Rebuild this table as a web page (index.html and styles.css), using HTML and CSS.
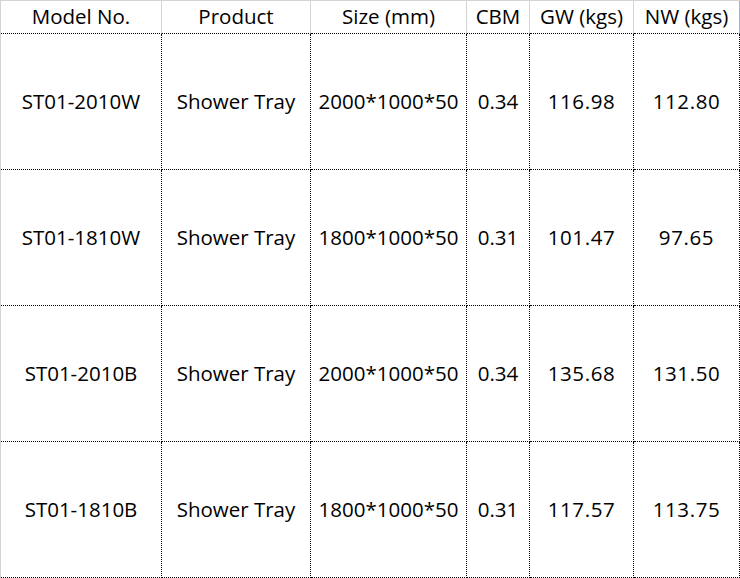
FILE: index.html
```html
<!DOCTYPE html>
<html>
<head>
<meta charset="utf-8">
<link rel="stylesheet" href="styles.css">
</head>
<body>
<table class="spec">
  <thead>
    <tr class="head">
      <th class="c1">Model No.</th>
      <th class="c2">Product</th>
      <th class="c3">Size (mm)</th>
      <th class="c4">CBM</th>
      <th class="c5">GW (kgs)</th>
      <th class="c6 last">NW (kgs)</th>
    </tr>
  </thead>
  <tbody>
    <tr class="row">
      <td>ST01-2010W</td><td>Shower Tray</td><td>2000*1000*50</td><td>0.34</td><td class="num">116.98</td><td class="num">112.80</td>
    </tr>
    <tr class="row">
      <td>ST01-1810W</td><td>Shower Tray</td><td>1800*1000*50</td><td>0.31</td><td class="num">101.47</td><td class="num">97.65</td>
    </tr>
    <tr class="row">
      <td>ST01-2010B</td><td>Shower Tray</td><td>2000*1000*50</td><td>0.34</td><td class="num">135.68</td><td class="num">131.50</td>
    </tr>
    <tr class="row">
      <td>ST01-1810B</td><td>Shower Tray</td><td>1800*1000*50</td><td>0.31</td><td class="num">117.57</td><td class="num">113.75</td>
    </tr>
  </tbody>
</table>
</body>
</html>
```
FILE: styles.css
```css
html, body {
  margin: 0;
  padding: 0;
  background: #ffffff;
}
.spec {
  border-collapse: separate;
  border-spacing: 0;
  table-layout: fixed;
  width: 740px;
  border-left: 1px solid #d4d4d4;
  border-top: 1px solid #d4d4d4;
  font-family: "Open Sans", "Noto Sans", sans-serif;
  font-size: 20.5px;
  color: #000;
}
.spec th, .spec td {
  padding: 0 0 2px 0;
  text-align: center;
  vertical-align: middle;
  white-space: nowrap;
  font-weight: normal;
}
.spec th {
  border-right: 1px solid #d4d4d4;
  border-bottom: 1px dotted #000;
}
.spec th.last {
  border-right-color: #9fb3cc;
}
.spec td {
  border-right: 1px dotted #000;
  border-bottom: 1px dotted #000;
}
.spec td.num {
  letter-spacing: 0.6px;
}
.head { height: 33px; }
.row { height: 136px; }
.c1 { width: 160px; }
.c2 { width: 148px; }
.c3 { width: 155px; }
.c4 { width: 62px; }
.c5 { width: 103px; }
.c6 { width: 105px; }
```
